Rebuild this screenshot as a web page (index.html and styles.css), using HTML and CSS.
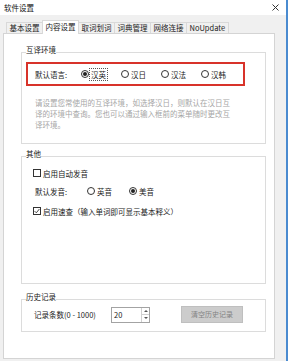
FILE: index.html
```html
<!DOCTYPE html>
<html lang="zh-CN">
<head>
<meta charset="utf-8">
<title>软件设置</title>
<link rel="stylesheet" href="styles.css">
</head>
<body>
<div class="window">
  <div class="titlebar">
    <span class="title">软件设置</span>
    <svg class="close" width="7" height="7" viewBox="0 0 7 7"><path d="M0.5 0.5 L6.5 6.5 M6.5 0.5 L0.5 6.5" stroke="#333" stroke-width="1" fill="none"/></svg>
  </div>
  <div class="tabs">
    <div class="tab">基本设置</div>
    <div class="tab active">内容设置</div>
    <div class="tab">取词划词</div>
    <div class="tab">词典管理</div>
    <div class="tab">网络连接</div>
    <div class="tab">NoUpdate</div>
  </div>
  <div class="panel">
    <fieldset class="group group-env">
      <legend>互译环境</legend>
      <div class="highlight">
        <span class="field-label">默认语言:</span>
        <span class="radio checked focus"><span class="dot"></span><span class="text">汉英</span></span>
        <span class="radio"><span class="dot"></span><span class="text">汉日</span></span>
        <span class="radio"><span class="dot"></span><span class="text">汉法</span></span>
        <span class="radio"><span class="dot"></span><span class="text">汉韩</span></span>
      </div>
      <p class="desc">请设置您常使用的互译环境，如选择汉日，则默认在汉日互译的环境中查询。您也可以通过输入框前的菜单随时更改互译环境。</p>
    </fieldset>
    <fieldset class="group group-other">
      <legend>其他</legend>
      <div class="row row-auto">
        <span class="check"></span><span>启用自动发音</span>
      </div>
      <div class="row row-voice">
        <span class="field-label voice-label">默认发音:</span>
        <span class="radio wide"><span class="dot"></span><span class="text">英音</span></span>
        <span class="radio checked"><span class="dot"></span><span class="text">美音</span></span>
      </div>
      <div class="row row-quick">
        <span class="check checked"><svg width="6" height="6" viewBox="0 0 6 6"><path d="M0.6 3.1 L2.3 4.8 L5.4 1" stroke="#333" stroke-width="0.9" fill="none"/></svg></span><span>启用速查（输入单词即可显示基本释义）</span>
      </div>
    </fieldset>
    <fieldset class="group group-history">
      <legend>历史记录</legend>
      <div class="row row-history">
        <span class="field-label history-label">记录条数(0 - 1000)</span>
        <div class="spin">
          <span class="spin-value">20</span>
          <span class="spin-btns"><span class="spin-up"></span><span class="spin-down"></span></span>
        </div>
        <button class="clear-btn" disabled>清空历史记录</button>
      </div>
    </fieldset>
  </div>
</div>
</body>
</html>
```
FILE: styles.css
```css
* { box-sizing: border-box; }

body {
  margin: 0;
  background: #f0f0f0;
  font-family: "Noto Sans CJK SC", "Noto Sans", sans-serif;
  font-size: 7.5px;
  color: #222;
}

.window {
  width: 288px;
  height: 361px;
  background: #f0f0f0;
  border-right: 2px solid #4a8bd0;
}

.titlebar {
  height: 15px;
  background: #fff;
  display: flex;
  align-items: center;
  justify-content: space-between;
  padding: 0 7px 0 4px;
}

.title { line-height: 10px; color: #111; }

.close { display: block; }

.tabs {
  height: 18px;
  display: flex;
  align-items: flex-end;
  padding-left: 6px;
}

.tab {
  height: 11px;
  line-height: 10px;
  padding: 0 2.5px;
  border: 1px solid #d9d9d9;
  border-bottom: 0;
  background: #f0f0f0;
  margin-right: -1px;
  white-space: nowrap;
}

.tab.active {
  height: 14px;
  line-height: 12px;
  background: #fff;
  margin-bottom: -1px;
  position: relative;
  z-index: 1;
}

.panel {
  margin-left: 3px;
  width: 272px;
  height: 326px;
  border: 1px solid #d4d4d4;
  background: #fff;
  padding-top: 11px;
}

.group {
  margin: 0 0 0 17px;
  width: 245px;
  border: 1px solid #dcdcdc;
  padding: 0 4px;
  min-width: 0;
}

.group legend {
  padding: 0 0 4px;
  line-height: 10px;
  font-size: 7.5px;
  color: #222;
}

.group-env { padding-bottom: 13px; }

.highlight {
  margin-top: 3px;
  width: 219px;
  height: 24px;
  border: 2px solid #d8332a;
  display: flex;
  align-items: center;
  padding-left: 7px;
}

.field-label { width: 46px; white-space: nowrap; }

.radio {
  display: flex;
  align-items: center;
  width: 40px;
}

.radio.wide { width: 42px; }

.radio .dot {
  width: 8px;
  height: 8px;
  border: 1px solid #333;
  border-radius: 50%;
  display: flex;
  align-items: center;
  justify-content: center;
  flex: none;
}

.radio.checked .dot::after {
  content: "";
  width: 4px;
  height: 4px;
  border-radius: 50%;
  background: #222;
}

.radio .text {
  border: 1px solid transparent;
  padding: 0 1px;
  line-height: 11px;
  white-space: nowrap;
}

.radio.focus .text { border: 1px dotted #555; }

.desc {
  margin: 11px 0 0 9px;
  width: 198px;
  line-height: 11px;
  color: #a6a6a6;
}

.group-other { margin-top: 5px; padding-bottom: 65px; }

.row {
  display: flex;
  align-items: center;
  height: 14px;
  white-space: nowrap;
}

.row-auto { margin: 3px 0 0 7px; }
.row-voice { margin: 4px 0 0 9px; }
.row-quick { margin: 6px 0 0 7px; }

.voice-label { width: 52px; }

.check {
  width: 8px;
  height: 8px;
  border: 1px solid #333;
  margin-right: 2px;
  display: flex;
  align-items: center;
  justify-content: center;
  flex: none;
}

.check svg { display: block; }

.group-history { margin-top: 8px; padding-bottom: 8px; }

.row-history { height: 17px; margin-left: 8px; }

.history-label { width: 77px; }

.spin {
  width: 39px;
  height: 16px;
  border: 1px solid #a3a3a3;
  background: #fff;
  display: flex;
}

.spin-value {
  flex: 1;
  padding-left: 2px;
  line-height: 13px;
}

.spin-btns {
  width: 8px;
  display: flex;
  flex-direction: column;
  border-left: 1px solid #d0d0d0;
}

.spin-btns span {
  flex: 1;
  display: flex;
  align-items: center;
  justify-content: center;
}

.spin-up::after {
  content: "";
  border-left: 2px solid transparent;
  border-right: 2px solid transparent;
  border-bottom: 2px solid #555;
}

.spin-down { border-top: 1px solid #d0d0d0; }

.spin-down::after {
  content: "";
  border-left: 2px solid transparent;
  border-right: 2px solid transparent;
  border-top: 2px solid #555;
}

.clear-btn {
  margin-left: 31px;
  width: 62px;
  height: 17px;
  padding: 0;
  border: 1px solid #bfbfbf;
  background: #cccccc;
  color: #838383;
  font-family: "Noto Sans CJK SC", "Noto Sans", sans-serif;
  font-size: 7px;
  line-height: 15px;
}
```
